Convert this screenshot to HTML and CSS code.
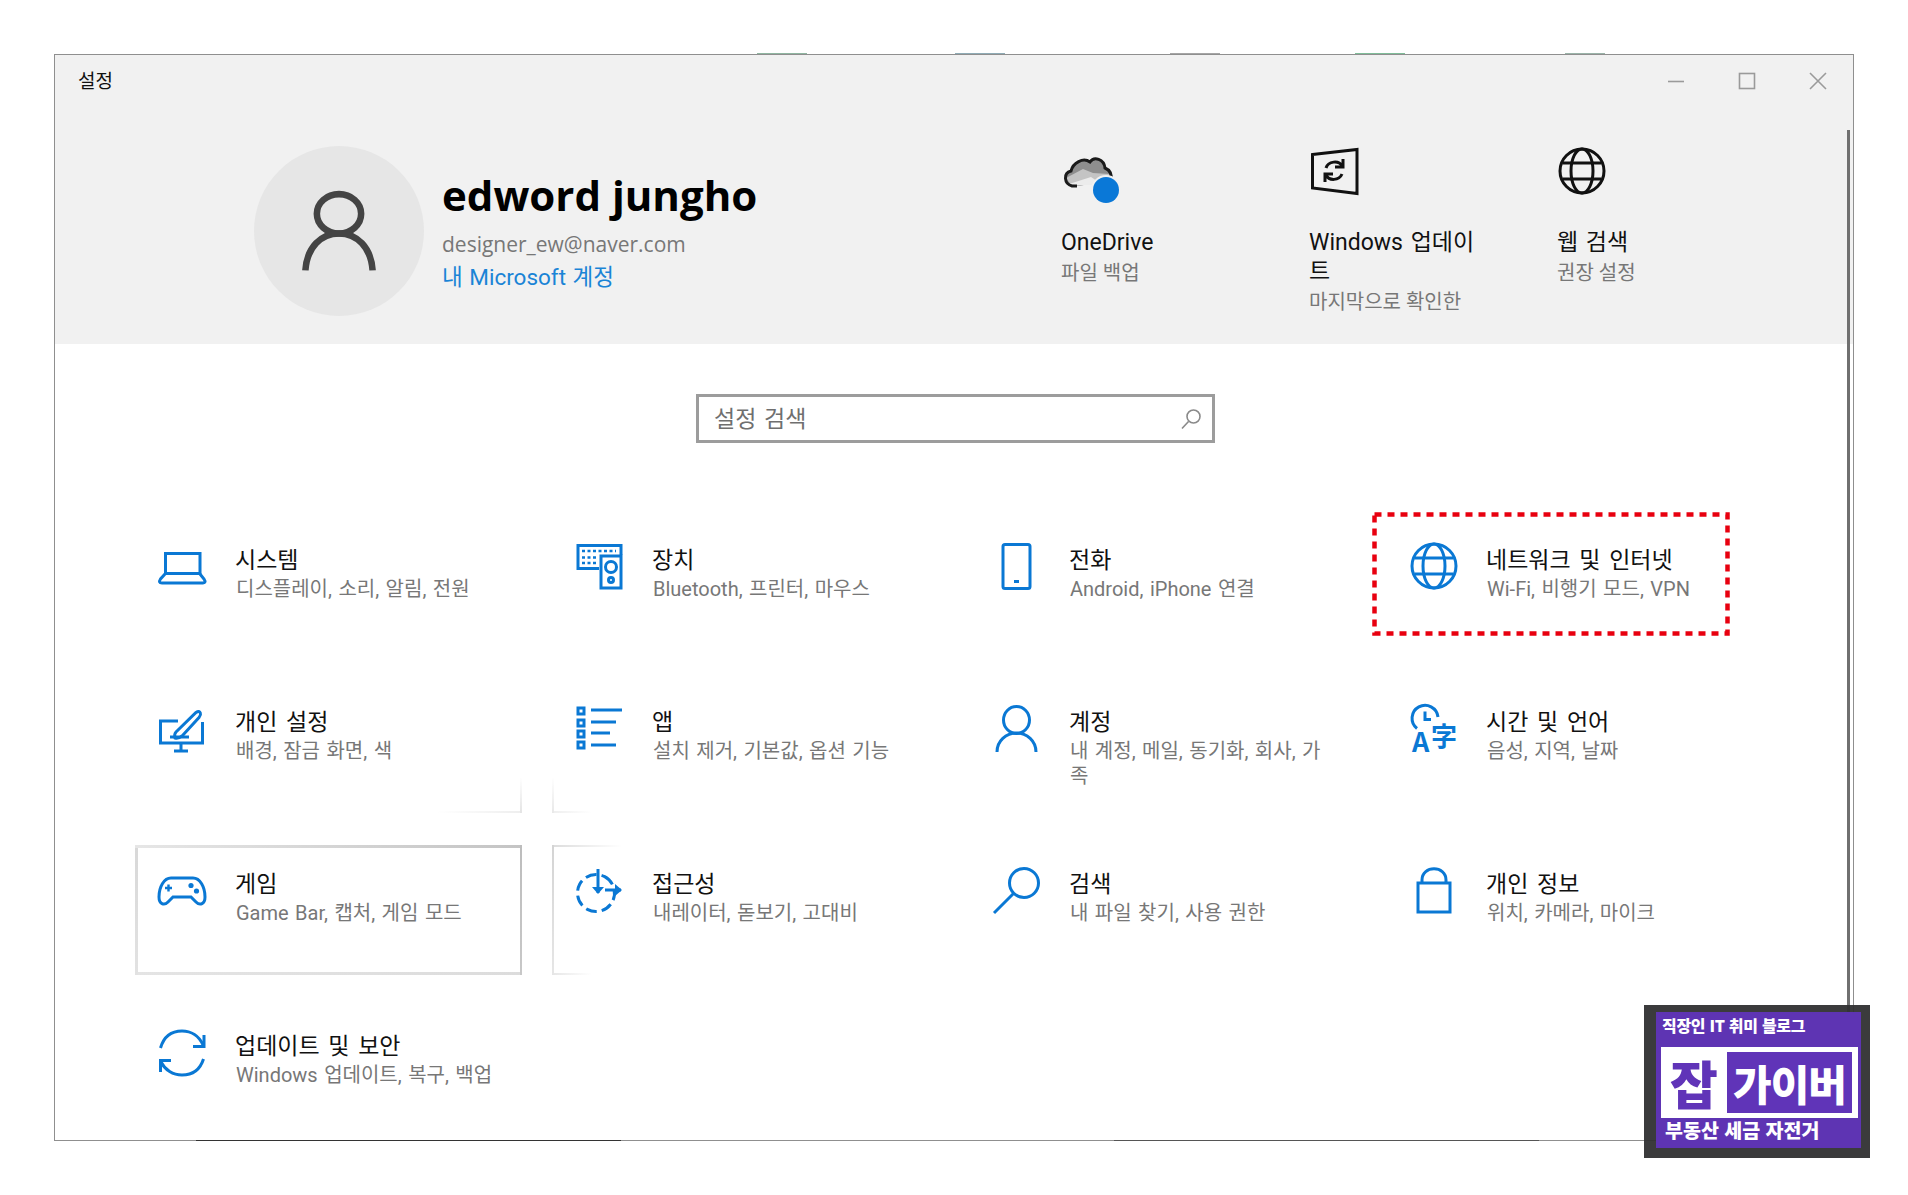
FILE: index.html
```html
<!DOCTYPE html>
<html lang="ko">
<head>
<meta charset="utf-8">
<title>설정</title>
<link rel="stylesheet" href="styles.css">
</head>
<body>
<div class="window">
  <div class="topmarks"></div>
  <div class="scrollbar"></div>
  <header class="head">
    <div class="titlebar">
      <span class="apptitle">설정</span>
      <div class="controls">
        <svg class="ctl" viewBox="0 0 18 18"><path d="M1 9.5H17"/></svg>
        <svg class="ctl" viewBox="0 0 18 18"><rect x="1.5" y="1.5" width="15" height="15"/></svg>
        <svg class="ctl" viewBox="0 0 18 18"><path d="M1 1L17 17M17 1L1 17"/></svg>
      </div>
    </div>
    <div class="hero">
      <div class="avatar">
        <svg viewBox="0 0 100 100" class="avatar-icon"><ellipse cx="50" cy="29" rx="27" ry="24"/><path d="M9 98C11 70 28 53 50 53C72 53 89 70 91 98"/></svg>
      </div>
      <div class="profile">
        <div class="name">edword jungho</div>
        <div class="email">designer_ew@naver.com</div>
        <div class="link">내 Microsoft 계정</div>
      </div>
      <div class="quick q1">
        <svg class="qicon" viewBox="0 0 60 60">
          <path d="M14 38H9C1 36 0 25 8 23C10 15 20 9 27 14C31 8 41 11 42 20C47 22 49 27 48 33Z" fill="#8e8e8e"/>
          <path d="M3 30L20 21L30 25L46 26L48 33L14 38H9Z" fill="#c4c4c4"/>
          <path d="M6 36L28 29L40 37H12Z" fill="#ececec"/>
          <path d="M14 38H9C1 36 0 25 8 23C10 15 20 9 27 14C31 8 41 11 42 20C47 22 49 27 48 33" fill="none" stroke="#1a1a1a" stroke-width="3"/>
          <circle cx="43" cy="42" r="15" fill="#f1f1f1"/>
          <circle cx="43" cy="42" r="13" fill="#0a78d7"/>
        </svg>
        <div class="qt">OneDrive</div>
        <div class="qs">파일 백업</div>
      </div>
      <div class="quick q2">
        <svg class="qicon" viewBox="0 0 60 60">
          <path d="M2.500 6.500L47 1.500V45.500L2.500 40Z" fill="none" stroke="#111" stroke-width="3"/>
          <path d="M16 20C18 13 29 12 32 18M33 11V19H25M32 26C29 33 19 33 16 27M15 34V26H23" fill="none" stroke="#111" stroke-width="3"/>
        </svg>
        <div class="qt">Windows 업데이<br>트</div>
        <div class="qs">마지막으로 확인한</div>
      </div>
      <div class="quick q3">
        <svg class="qicon" viewBox="0 0 60 60">
          <g fill="none" stroke="#111" stroke-width="3"><circle cx="25" cy="23" r="22"/><ellipse cx="25" cy="23" rx="11" ry="22"/><path d="M5.500 15H44.500M5.500 31H44.500"/></g>
        </svg>
        <div class="qt">웹 검색</div>
        <div class="qs">권장 설정</div>
      </div>
    </div>
  </header>

  <div class="searchwrap">
    <div class="search">
      <span class="placeholder">설정 검색</span>
      <svg class="search-icon" viewBox="0 0 22 22"><circle cx="13.5" cy="8.5" r="6.5"/><path d="M8.5 13.5L2 20.5"/></svg>
    </div>
  </div>

  <main class="grid">
    <div class="tile">
      <svg class="icon" viewBox="0 0 48 48"><path d="M7.500 10.500H42V30.500H7.500Z"/><path d="M7 31L2.500 36Q0 40 4 40H45Q48.500 40 46 36L42 31"/></svg>
      <div class="txt"><div class="t">시스템</div><div class="s">디스플레이, 소리, 알림, 전원</div></div>
    </div>
    <div class="tile">
      <svg class="icon" viewBox="0 0 48 48"><path d="M24 25.500H3V2.500H46V12"/><rect x="26" y="13" width="20" height="32"/><circle cx="36" cy="24" r="5.500"/><circle cx="36" cy="37" r="2.500"/><path class="thin" d="M7 8H41M7 14.500H22M7 20H22" stroke-dasharray="3 2.500"/></svg>
      <div class="txt"><div class="t">장치</div><div class="s">Bluetooth, 프린터, 마우스</div></div>
    </div>
    <div class="tile">
      <svg class="icon" viewBox="0 0 48 48"><rect x="11" y="1.500" width="27" height="44" rx="2"/><path d="M22 38.500H27"/></svg>
      <div class="txt"><div class="t">전화</div><div class="s">Android, iPhone 연결</div></div>
    </div>
    <div class="tile network">
      <svg class="icon" viewBox="0 0 48 48"><circle cx="25" cy="23" r="22"/><ellipse cx="25" cy="23" rx="11" ry="22"/><path d="M5.500 15H44.500M5.500 31H44.500"/></svg>
      <div class="txt"><div class="t">네트워크 및 인터넷</div><div class="s">Wi-Fi, 비행기 모드, VPN</div></div>
      <svg class="redbox" viewBox="0 0 358 124"><rect x="2.500" y="2.500" width="353" height="119"/></svg>
    </div>

    <div class="tile corner-right">
      <svg class="icon" viewBox="0 0 48 48"><path d="M20 16H2.500V38H44.500V17"/><path d="M16 46H30M23 38V46M12 32H31"/><path d="M18 27L38 7.500Q41.500 5 42.500 8.500Q43 10 41 12.500L25 30Q21 34 17 33Q16 29 18 27Z"/></svg>
      <div class="txt"><div class="t">개인 설정</div><div class="s">배경, 잠금 화면, 색</div></div>
    </div>
    <div class="tile corner-left">
      <svg class="icon" viewBox="0 0 48 48"><rect x="3" y="3" width="6" height="6"/><rect x="3" y="15" width="6" height="6"/><rect x="3" y="26" width="6" height="6"/><rect x="3" y="37" width="6" height="6"/><path d="M16 5H47M16 17H41M16 28H35M16 40H41"/></svg>
      <div class="txt"><div class="t">앱</div><div class="s">설치 제거, 기본값, 옵션 기능</div></div>
    </div>
    <div class="tile">
      <svg class="icon" viewBox="0 0 48 48"><ellipse cx="24.500" cy="15" rx="13" ry="13.500"/><path d="M5 47C5 36 14 28 24.500 28C35 28 44 36 44 47"/></svg>
      <div class="txt"><div class="t">계정</div><div class="s">내 계정, 메일, 동기화, 회사, 가<br>족</div></div>
    </div>
    <div class="tile">
      <svg class="icon" viewBox="0 0 48 48"><path d="M8 23.500A13 13 0 1 1 29 12"/><path d="M16 6.500V14.500H22"/><text x="3" y="47" class="glyph" font-size="27">A</text><text x="22" y="41" class="glyph" font-size="26">字</text></svg>
      <div class="txt"><div class="t">시간 및 언어</div><div class="s">음성, 지역, 날짜</div></div>
    </div>

    <div class="tile full">
      <svg class="icon" viewBox="0 0 48 48"><path d="M13 11H35C42 11 47 20 47 30C47 37 42 39 38 35L33 30H15L10 35C6 39 1 37 1 30C1 20 6 11 13 11Z"/><path class="thin" d="M7 21H14M10.500 17.500V24.500"/><circle class="dot" cx="33" cy="18.500" r="2.600"/><circle class="dot" cx="38.500" cy="24" r="2.600"/></svg>
      <div class="txt"><div class="t">게임</div><div class="s">Game Bar, 캡처, 게임 모드</div></div>
    </div>
    <div class="tile fade-left">
      <svg class="icon" viewBox="0 0 48 48"><circle cx="21" cy="26" r="18.500" stroke-dasharray="11 5" transform="rotate(-62 21 26)"/><path d="M23 2V26"/><path class="solid" d="M17 20H29L23 27Z"/><path d="M30 23H46"/><path class="solid" d="M40 17V29L47 23Z"/></svg>
      <div class="txt"><div class="t">접근성</div><div class="s">내레이터, 돋보기, 고대비</div></div>
    </div>
    <div class="tile">
      <svg class="icon" viewBox="0 0 48 48"><circle cx="32" cy="16" r="14.500"/><path d="M21.500 26.500L2 46"/></svg>
      <div class="txt"><div class="t">검색</div><div class="s">내 파일 찾기, 사용 권한</div></div>
    </div>
    <div class="tile">
      <svg class="icon" viewBox="0 0 48 48"><rect x="9" y="16" width="32" height="29"/><path d="M13 16V13C13 -2 37 -2 37 13V16"/></svg>
      <div class="txt"><div class="t">개인 정보</div><div class="s">위치, 카메라, 마이크</div></div>
    </div>

    <div class="tile">
      <svg class="icon" viewBox="0 0 48 48"><path d="M2.500 19C6 7 14 2 24 2C33 2 41 7 45 16"/><path d="M46 6V17.500H35"/><path d="M45.500 30C42 41 34 46 24 46C15 46 7 41 3 33"/><path d="M2.500 43V31.500H13"/></svg>
      <div class="txt"><div class="t">업데이트 및 보안</div><div class="s">Windows 업데이트, 복구, 백업</div></div>
    </div>
  </main>
  <div class="bottommarks"></div>
</div>

<aside class="badge">
  <div class="badge-in">
    <div class="b-top">직장인 IT 취미 블로그</div>
    <div class="b-mid">
      <span class="b-jab">잡</span>
      <span class="b-gb">가이버</span>
    </div>
    <div class="b-bot">부동산 세금 자전거</div>
  </div>
</aside>
</body>
</html>
```

FILE: styles.css
```css
* { box-sizing: border-box; }
html, body { margin: 0; padding: 0; background: #fff; }
body {
  width: 1908px;
  height: 1195px;
  padding: 54px 0 0 54px;
  overflow: hidden;
  font-family: Roboto, "Noto Sans CJK KR", sans-serif;
  color: #111;
  position: relative;
}
.window {
  width: 1800px;
  height: 1087px;
  border: 1px solid #8f8f8f;
  background: #fff;
  position: relative;
}
.topmarks {
  position: absolute;
  left: 650px; top: -2px;
  width: 1040px; height: 2px;
  background:
    linear-gradient(#8fb5a0,#8fb5a0) 52px 0/50px 1px no-repeat,
    linear-gradient(#8fabb5,#8fabb5) 250px 0/50px 1px no-repeat,
    linear-gradient(#a5a5a5,#a5a5a5) 465px 0/50px 1px no-repeat,
    linear-gradient(#7fbc98,#7fbc98) 650px 0/50px 1px no-repeat,
    linear-gradient(#9ab3a8,#9ab3a8) 860px 0/40px 1px no-repeat;
}
.bottommarks {
  position: absolute;
  left: 141px; bottom: -1px;
  width: 1344px; height: 1px;
  background:
    linear-gradient(#333,#333) 0 0/425px 1px no-repeat,
    linear-gradient(#555,#555) 918px 0/425px 1px no-repeat;
}
.scrollbar {
  position: absolute;
  right: 3px; top: 75px;
  width: 3px; height: 1011px;
  background: #707070;
}
.head { background: #f1f1f1; height: 289px; }
.titlebar { height: 52px; display: flex; align-items: center; justify-content: space-between; padding: 0 26px 0 23px; }
.apptitle { font-size: 19px; line-height: 52px; padding-top: 2px; }
.controls { display: flex; gap: 53px; }
.ctl { width: 18px; height: 18px; fill: none; stroke: #9a9a9a; stroke-width: 1.6; }
.hero { display: flex; align-items: flex-start; padding-left: 199px; }
.avatar { width: 170px; height: 170px; margin-top: 39px; border-radius: 50%; background: #e6e6e6; display: flex; align-items: center; justify-content: center; flex: none; }
.avatar-icon { width: 82px; height: 82px; fill: none; stroke: #444; stroke-width: 8; }
.profile { width: 637px; padding: 64px 0 0 18px; flex: none; }
.name { font-family: "Open Sans", "Noto Sans CJK KR", sans-serif; font-size: 42px; font-weight: 700; line-height: 48px; color: #000; white-space: nowrap; }
.email { font-family: "Open Sans", "Noto Sans CJK KR", sans-serif; font-size: 21px; line-height: 28px; margin-top: 11px; color: #777; white-space: nowrap; }
.link { font-size: 22.500px; line-height: 32px; margin-top: 3px; color: #1a84d6; white-space: nowrap; word-spacing: 1px; }
.quick { width: 248px; flex: none; padding-top: 41px; }
.qicon { display: block; width: 60px; height: 60px; margin: 0 0 20px 0; overflow: visible; }
.q1 .qicon { margin-left: 2px; }
.q2 .qicon { margin-left: 1px; }
.qt { font-size: 23px; line-height: 29px; color: #111; word-spacing: 2px; white-space: nowrap; }
.qs { font-size: 20px; line-height: 27px; margin-top: 3px; color: #777; white-space: nowrap; }

.searchwrap { padding: 50px 0 0 641px; height: 177px; }
.search { width: 519px; height: 49px; border: 3px solid #9c9c9c; background: #fff; display: flex; align-items: center; justify-content: space-between; padding: 0 10px 0 15px; }
.placeholder { font-size: 23px; word-spacing: 2px; color: #6f6f6f; padding-bottom: 4px; }
.search-icon { width: 22px; height: 22px; fill: none; stroke: #8a8a8a; stroke-width: 1.6; }

.grid {
  display: grid;
  grid-template-columns: repeat(4, 387px);
  grid-auto-rows: 130px;
  column-gap: 30px;
  row-gap: 32px;
  padding-left: 80px;
}
.tile { display: flex; align-items: flex-start; padding: 22px 0 0 23px; position: relative; }
.icon { width: 48px; height: 48px; flex: none; fill: none; stroke: #0a78d4; stroke-width: 3; overflow: visible; }
.icon .thin { stroke-width: 2.4; }
.icon .dot, .icon .solid { fill: #0a78d4; stroke: none; }
.icon .glyph { font-family: "Noto Sans CJK SC", sans-serif; font-weight: 700; fill: #0a78d4; stroke: none; }
.txt { margin-left: 29px; padding-top: 3px; min-width: 0; }
.t { font-size: 23px; line-height: 30px; color: #111; white-space: nowrap; word-spacing: 3px; }
.s { font-size: 20px; line-height: 25px; margin-top: 1px; padding-left: 1px; color: #777; white-space: nowrap; word-spacing: 1.500px; }
.redbox { position: absolute; left: -14px; top: -9px; width: 358px; height: 124px; fill: none; stroke: #e8000f; stroke-width: 4.500; stroke-dasharray: 7 6; }

.full {
  background:
    linear-gradient(#bdbdbd,#c8c8c8) 100% 0/2.500px 100% no-repeat,
    linear-gradient(90deg,#e6e6e6,#c4c4c4) 0 0/100% 3px no-repeat,
    linear-gradient(#d8d8d8,#e2e2e2) 0 0/3px 100% no-repeat,
    linear-gradient(90deg,#e4e4e4,#dcdcdc) 0 100%/100% 3px no-repeat;
}
.fade-left {
  background:
    linear-gradient(#d4d4d4,#e6e6e6) 0 0/2px 100% no-repeat,
    linear-gradient(90deg,#dcdcdc,#fff) 0 0/70px 2px no-repeat,
    linear-gradient(90deg,#e6e6e6,#fff) 0 100%/40px 2px no-repeat;
}
.corner-right {
  background:
    linear-gradient(#fff,#e4e4e4) 100% 100%/2px 36px no-repeat,
    linear-gradient(90deg,#fff,#eee) 100% 100%/85px 2px no-repeat;
}
.corner-left {
  background:
    linear-gradient(#fff,#e8e8e8) 0 100%/2px 36px no-repeat,
    linear-gradient(90deg,#eee,#fff) 0 100%/40px 2px no-repeat;
}

.badge {
  position: absolute;
  left: 1644px; top: 1005px;
  width: 226px; height: 153px;
  padding: 7px 9px 10px 12px;
  background: rgba(48,48,50,.95);
}
.badge-in { height: 136px; background: rgba(96,52,184,.96); padding: 2px 3px 0 5px; color: #fff; font-family: "Noto Sans CJK KR", sans-serif; font-weight: 900; }
.b-top { font-size: 16px; line-height: 22px; height: 33px; padding-left: 1px; white-space: nowrap; letter-spacing: -.3px; }
.b-mid { height: 71px; background: #fff; display: flex; align-items: center; padding-right: 6px; }
.b-jab { width: 66px; text-align: center; color: #6034b8; font-size: 52px; line-height: 61px; }
.b-gb { flex: 1; height: 61px; background: #6034b8; color: #fff; font-size: 42px; line-height: 61px; text-align: center; letter-spacing: -1px; white-space: nowrap; }
.b-bot { font-size: 19.500px; line-height: 24px; padding-left: 4px; white-space: nowrap; }
```
